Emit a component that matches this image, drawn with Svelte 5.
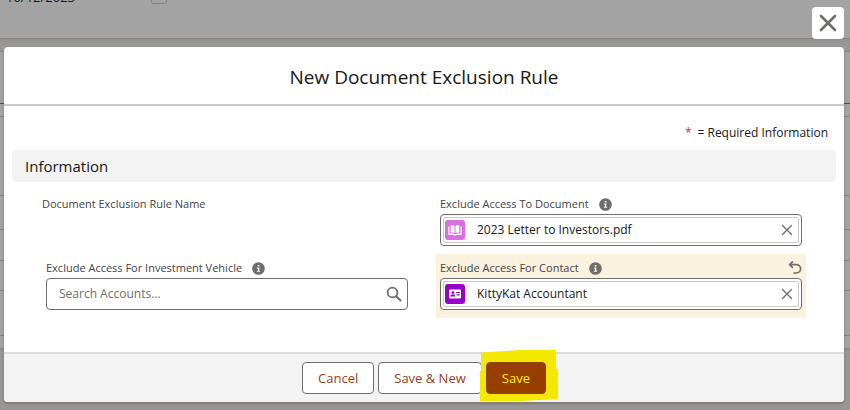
<script>
  let query = $state('');
  const rows = [52, 13, 79, 34, 31, 30, 45];
</script>

{#snippet info(label)}
  <button class="icon-button info" type="button" aria-label={`Help for ${label}`}>
    <svg viewBox="0 0 14 14" width="13" height="13" aria-hidden="true">
      <circle cx="7" cy="7" r="6.8" fill="#706e6b" />
      <path d="M6.2 3.2h1.8v1.6H6.2zM5.5 6h2.4v3.6h.8v1H5.3v-1h.9V7h-.7z" fill="#fff" />
    </svg>
  </button>
{/snippet}

{#snippet cross()}
  <svg viewBox="0 0 12 12" width="12" height="12" aria-hidden="true">
    <path d="M1.5 1.5l9 9M10.5 1.5l-9 9" fill="none" stroke="#706e6b" stroke-width="1.4" stroke-linecap="round" />
  </svg>
{/snippet}

<div class="backdrop" aria-hidden="true">
  <div class="panel top"><span>10/12/2023</span><i class="box"></i></div>
  <div class="panel records">
    {#each rows as height, i}
      <div class="record" class:strong={i === 0} style:height={`${height}px`}></div>
    {/each}
  </div>
</div>

<div class="overlay">
  <button class="close" type="button" aria-label="Close">
    <svg viewBox="0 0 18 18" width="18" height="18" aria-hidden="true">
      <path d="M2 2l14 14M16 2L2 16" fill="none" stroke="#706e6b" stroke-width="2.6" stroke-linecap="round" />
    </svg>
  </button>

  <form class="modal" role="dialog" aria-labelledby="title" onsubmit={(e) => e.preventDefault()}>
    <header><h1 id="title">New Document Exclusion Rule</h1></header>

    <div class="content">
      <p class="required"><span class="star">*</span><span>= Required Information</span></p>
      <h2>Information</h2>
      <div class="grid">
        <div class="field plain"><div class="label"><span>Document Exclusion Rule Name</span></div></div>
        <div class="field">
          <div class="label">
            <label for="document">Exclude Access To Document</label>
            {@render info('Exclude Access To Document')}
          </div>
          <div class="control">
            <div class="pill">
              <svg class="entity" viewBox="0 0 20 20" width="20" height="20" aria-hidden="true">
                <rect width="20" height="20" rx="3" fill="#d870dd" />
                <path d="M5.7 5.2h2.5c.8 0 1.3.5 1.3 1.2v6.7c-.3-.4-.8-.6-1.3-.6H5.7zM14.3 5.2h-2.5c-.8 0-1.3.5-1.3 1.2v6.7c.3-.4.8-.6 1.3-.6h2.5z" fill="#fff" />
                <path d="M3.9 6.5v7.6h4.5l.8.7h1.6l.8-.7h4.5V6.5" fill="none" stroke="#fff" stroke-width="1.2" />
              </svg>
              <input id="document" value="2023 Letter to Investors.pdf" readonly />
              <button class="icon-button" type="button" aria-label="Clear document">{@render cross()}</button>
            </div>
          </div>
        </div>
        <div class="field">
          <div class="label">
            <label for="vehicle">Exclude Access For Investment Vehicle</label>
            {@render info('Exclude Access For Investment Vehicle')}
          </div>
          <div class="control search">
            <input id="vehicle" placeholder="Search Accounts..." bind:value={query} />
            <svg viewBox="0 0 16 16" width="16" height="16" aria-hidden="true">
              <circle cx="6.5" cy="6.5" r="4.9" fill="none" stroke="#706e6b" stroke-width="1.8" />
              <path d="M10.2 10.2l4.3 4.3" stroke="#706e6b" stroke-width="2" stroke-linecap="round" />
            </svg>
          </div>
        </div>
        <div class="field edited">
          <div class="label">
            <label for="contact">Exclude Access For Contact</label>
            {@render info('Exclude Access For Contact')}
            <button class="icon-button undo" type="button" aria-label="Undo contact change">
              <svg viewBox="0 0 14 14" width="14" height="14" aria-hidden="true">
                <path d="M4.4 0.9L1.6 3.6l2.8 2.7M1.8 3.6h6.6a4.2 4.2 0 0 1 0 8.4H6" fill="none" stroke="#706e6b" stroke-width="1.7" stroke-linecap="round" stroke-linejoin="round" />
              </svg>
            </button>
          </div>
          <div class="control">
            <div class="pill">
              <svg class="entity" viewBox="0 0 20 20" width="20" height="20" aria-hidden="true">
                <rect width="20" height="20" rx="3" fill="#9602c7" />
                <rect x="4" y="5.5" width="12" height="9" rx="1.2" fill="#fff" />
                <circle cx="7.9" cy="8.6" r="1.4" fill="#9602c7" />
                <path d="M5.4 12.4c0-1.5 1-2.2 2.5-2.2s2.5.7 2.5 2.2zM11 7.9h3.7v1.2H11zM11.6 10.3h3.1v1.2h-3.1z" fill="#9602c7" />
              </svg>
              <input id="contact" value="KittyKat Accountant" readonly />
              <button class="icon-button" type="button" aria-label="Clear contact">{@render cross()}</button>
            </div>
          </div>
        </div>
      </div>
    </div>

    <footer>
      <button class="action" type="button">Cancel</button>
      <button class="action" type="button">Save &amp; New</button>
      <span class="marked">
        <svg class="marker" viewBox="0 0 78 51" width="78" height="51" aria-hidden="true">
          <path d="M1 2.5L40 0H76V19H78V49L40 51H0V21H1z" fill="#f5e800" />
        </svg>
        <button class="action primary" type="submit">Save</button>
      </span>
    </footer>
  </form>
</div>

<style>
  :global(body) {
    background: #999795;
    overflow: hidden;
  }
  .backdrop,
  .overlay,
  .overlay button,
  .overlay input {
    font-family: "Open Sans", "Noto Sans", sans-serif;
    font-size: 12px;
    line-height: 18px;
  }
  .backdrop {
    position: absolute;
    inset: 0;
    overflow: hidden;
    color: #181818;
  }
  .panel {
    background: #a3a3a3;
    border-bottom: 1px solid #858483;
    box-shadow: 0 2px 2px #92908f;
  }
  .top {
    display: flex;
    gap: 76px;
    height: 38px;
    padding-left: 6px;
    font-size: 13px;
  }
  .top span,
  .box {
    margin-top: -12px;
  }
  .box {
    width: 14px;
    height: 14px;
    border: 1px solid #858483;
    border-radius: 2px;
  }
  .records {
    margin-top: 12px;
    padding-bottom: 12px;
    border-top: 1px solid #858483;
  }
  .record {
    box-sizing: border-box;
    border-bottom: 1px solid #858483;
  }
  .record.strong {
    border-color: #4a4a4a;
  }
  .overlay {
    position: relative;
    display: flex;
    flex-direction: column;
    padding: 7px 6px 8px 4px;
    color: #181818;
  }
  button {
    cursor: pointer;
  }
  .close {
    display: grid;
    place-items: center;
    align-self: flex-end;
    width: 32px;
    height: 32px;
    margin-bottom: 8px;
    padding: 0;
    border: 0;
    border-radius: 4px;
    background: #fff;
  }
  .modal {
    border-radius: 4px;
    background: #fff;
    box-shadow: 0 2px 3px rgb(0 0 0 / 20%);
  }
  header {
    padding: 18px 16px 14px;
    border-bottom: 2px solid #c9c9c9;
    text-align: center;
  }
  h1,
  h2,
  p {
    margin: 0;
    font-weight: 400;
  }
  h1 {
    font-size: 19px;
    line-height: 25px;
  }
  .content {
    padding: 18px 8px 34px;
  }
  .required {
    display: flex;
    justify-content: flex-end;
    gap: 6px;
    padding-right: 8px;
    margin-bottom: 8px;
  }
  .star {
    color: #c23934;
  }
  h2 {
    padding: 4px 13px;
    border-radius: 4px;
    background: #f3f3f3;
    font-size: 15px;
    line-height: 24px;
  }
  .grid {
    display: grid;
    grid-template-columns: 1fr 1fr;
    column-gap: 24px;
    padding: 8px 30px 0;
  }
  .field {
    padding: 4px 4px 8px;
  }
  .plain {
    padding-left: 0;
  }
  .edited {
    background: #faf2df;
  }
  .label {
    display: flex;
    align-items: center;
    gap: 10px;
    height: 20px;
    color: #444;
    font-size: 11px;
  }
  .icon-button {
    display: grid;
    place-items: center;
    flex: none;
    padding: 0;
    border: 0;
    background: none;
  }
  .undo {
    margin-left: auto;
  }
  .control {
    display: flex;
    box-sizing: border-box;
    height: 32px;
    padding: 2px;
    border: 1px solid #706e6b;
    border-radius: 4px;
    background: #fff;
  }
  .pill {
    display: flex;
    flex: 1;
    align-items: center;
    gap: 12px;
    min-width: 0;
    padding: 0 5px 0 1px;
    border: 1px solid #c9c9c9;
    border-radius: 2px;
  }
  input {
    flex: 1;
    min-width: 0;
    padding: 0;
    border: 0;
    outline: 0;
    background: none;
    color: #181818;
  }
  input::placeholder {
    color: #706e6b;
    opacity: 1;
  }
  .search {
    align-items: center;
    padding: 0 5px 0 12px;
  }
  footer {
    display: flex;
    justify-content: center;
    gap: 4px;
    padding: 8px 0;
    border-top: 2px solid #dddbda;
    border-radius: 0 0 4px 4px;
    background: #f3f3f3;
  }
  .overlay .action {
    height: 32px;
    padding: 0 15px;
    border: 1px solid #706e6b;
    border-radius: 4px;
    background: #fff;
    color: #964020;
    font-size: 13px;
  }
  .marked {
    position: relative;
  }
  .marker {
    position: absolute;
    top: -12px;
    left: -6px;
  }
  .overlay .primary {
    position: relative;
    border-color: #963d00;
    background: #963d00;
    color: #fff000;
  }
</style>
